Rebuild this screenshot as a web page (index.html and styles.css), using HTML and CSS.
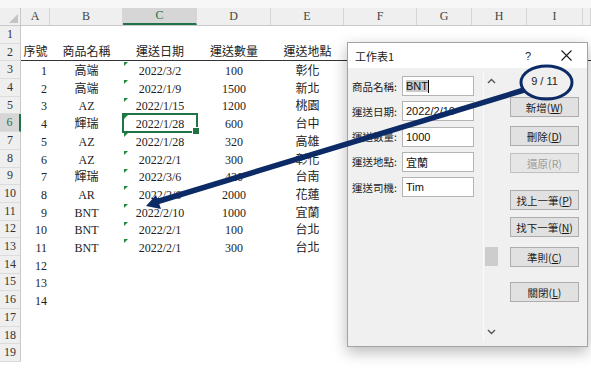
FILE: index.html
```html
<!DOCTYPE html>
<html lang="zh-Hant">
<head>
  <meta charset="UTF-8">
  <meta name="viewport" content="width=device-width, initial-scale=1.0">
  <title>工作表1 - 資料表單</title>
  <link rel="stylesheet" href="styles.css">
</head>
<body>

  <!-- Worksheet -->
  <div class="topbar"></div>
  <div class="sheet">
    <div class="row colhead">
      <div class="corner"><span class="corner-tri"></span></div>
      <div>A</div><div>B</div><div class="active">C</div><div>D</div><div>E</div>
      <div>F</div><div>G</div><div>H</div><div>I</div><div></div>
    </div>

    <div class="row"><div class="rh">1</div></div>
    <div class="row titles">
      <div class="rh">2</div>
      <div class="cell">序號</div><div class="cell">商品名稱</div><div class="cell">運送日期</div>
      <div class="cell">運送數量</div><div class="cell">運送地點</div>
      <div class="cell"></div><div class="cell"></div><div class="cell"></div><div class="cell"></div><div class="cell"></div>
    </div>
    <div class="row"><div class="rh">3</div><div class="cell num">1</div><div class="cell">高端</div><div class="cell tri">2022/3/2</div><div class="cell">100</div><div class="cell">彰化</div></div>
    <div class="row"><div class="rh">4</div><div class="cell num">2</div><div class="cell">高端</div><div class="cell tri">2022/1/9</div><div class="cell">1500</div><div class="cell">新北</div></div>
    <div class="row"><div class="rh">5</div><div class="cell num">3</div><div class="cell">AZ</div><div class="cell tri">2022/1/15</div><div class="cell">1200</div><div class="cell">桃園</div></div>
    <div class="row"><div class="rh active">6</div><div class="cell num">4</div><div class="cell">輝瑞</div><div class="cell tri sel">2022/1/28</div><div class="cell">600</div><div class="cell">台中</div></div>
    <div class="row"><div class="rh">7</div><div class="cell num">5</div><div class="cell">AZ</div><div class="cell tri">2022/1/28</div><div class="cell">320</div><div class="cell">高雄</div></div>
    <div class="row"><div class="rh">8</div><div class="cell num">6</div><div class="cell">AZ</div><div class="cell tri">2022/2/1</div><div class="cell">300</div><div class="cell">彰化</div></div>
    <div class="row"><div class="rh">9</div><div class="cell num">7</div><div class="cell">輝瑞</div><div class="cell tri">2022/3/6</div><div class="cell">420</div><div class="cell">台南</div></div>
    <div class="row"><div class="rh">10</div><div class="cell num">8</div><div class="cell">AR</div><div class="cell tri">2022/2/6</div><div class="cell">2000</div><div class="cell">花蓮</div></div>
    <div class="row"><div class="rh">11</div><div class="cell num">9</div><div class="cell">BNT</div><div class="cell tri">2022/2/10</div><div class="cell">1000</div><div class="cell">宜蘭</div></div>
    <div class="row"><div class="rh">12</div><div class="cell num">10</div><div class="cell">BNT</div><div class="cell tri">2022/2/1</div><div class="cell">100</div><div class="cell">台北</div></div>
    <div class="row"><div class="rh">13</div><div class="cell num">11</div><div class="cell">BNT</div><div class="cell tri">2022/2/1</div><div class="cell">300</div><div class="cell">台北</div></div>
    <div class="row"><div class="rh">14</div><div class="cell num">12</div></div>
    <div class="row"><div class="rh">15</div><div class="cell num">13</div></div>
    <div class="row"><div class="rh">16</div><div class="cell num">14</div></div>
    <div class="row"><div class="rh">17</div></div>
    <div class="row"><div class="rh">18</div></div>
    <div class="row"><div class="rh">19</div></div>
  </div>

  <!-- Data form dialog -->
  <div class="dialog">
    <div class="dlg-title">
      <span class="dlg-name">工作表1</span>
      <span class="dlg-help">?</span>
      <svg class="dlg-close" width="11" height="11" viewBox="0 0 11 11">
        <path d="M0.5 0.5L10.5 10.5M10.5 0.5L0.5 10.5" stroke="#1a1a1a" stroke-width="1.1" fill="none"/>
      </svg>
    </div>
    <div class="dlg-body">
      <div class="fields">
        <div class="field"><span class="label">商品名稱:</span><div class="input"><span class="hl">BNT</span><span class="caret"></span></div></div>
        <div class="field"><span class="label">運送日期:</span><div class="input">2022/2/10</div></div>
        <div class="field"><span class="label">運送數量:</span><div class="input">1000</div></div>
        <div class="field"><span class="label">運送地點:</span><div class="input">宜蘭</div></div>
        <div class="field"><span class="label">運送司機:</span><div class="input">Tim</div></div>
      </div>
      <div class="vscroll">
        <div class="arrow">
          <svg width="9" height="6" viewBox="0 0 9 6"><path d="M1 5L4.5 1.5L8 5" stroke="#555" stroke-width="1.4" fill="none"/></svg>
        </div>
        <div class="track"><div class="thumb"></div></div>
        <div class="arrow">
          <svg width="9" height="6" viewBox="0 0 9 6"><path d="M1 1L4.5 4.5L8 1" stroke="#555" stroke-width="1.4" fill="none"/></svg>
        </div>
      </div>
      <div class="actions">
        <div class="counter">9 / 11</div>
        <button class="btn">新增(<u>W</u>)</button>
        <button class="btn btn-del">刪除(<u>D</u>)</button>
        <button class="btn btn-undo" disabled>還原(R)</button>
        <button class="btn btn-prev">找上一筆(<u>P</u>)</button>
        <button class="btn btn-next">找下一筆(<u>N</u>)</button>
        <button class="btn btn-crit">準則(<u>C</u>)</button>
        <button class="btn btn-close">關閉(<u>L</u>)</button>
      </div>
    </div>
  </div>

  <!-- Callout: circle on record counter, arrow to the row -->
  <svg class="callout" width="591" height="371" viewBox="0 0 591 371">
    <ellipse cx="546.5" cy="82.5" rx="25.5" ry="16.5" fill="none" stroke="#0c2b66" stroke-width="3"/>
    <line x1="156" y1="202" x2="524" y2="90" stroke="#0c2b66" stroke-width="5.5"/>
    <polygon points="146,206 161,209 156,195" fill="#0c2b66"/>
  </svg>

</body>
</html>
```

FILE: styles.css
```css
/* Reset & base */
* { margin: 0; padding: 0; box-sizing: border-box; }
body {
  position: relative;
  width: 591px;
  height: 371px;
  overflow: hidden;
  background: #fff;
  font-family: "Liberation Serif", "Noto Sans CJK TC", serif;
  color: #222;
}

/* Worksheet */
.topbar { height: 8px; background: #f7f7f7; }
.sheet { --cols: 21px 29px 73px 74px 74px 73px 73px 55px 55px 56px 8px; }
.row {
  display: grid;
  grid-template-columns: var(--cols);
  height: 17.7px;
}

/* Column header */
.colhead {
  height: 18px;
  background: #efefef;
  border-bottom: 1px solid #c8c8c8;
}
.colhead > div {
  display: flex;
  align-items: center;
  justify-content: center;
  font-size: 12px;
  color: #444;
  border-right: 1px solid #d6d6d6;
}
.colhead > .active {
  background: #d6d6d6;
  color: #217346;
  border-bottom: 2px solid #217346;
}
.colhead > .corner {
  align-items: flex-end;
  justify-content: flex-end;
  padding: 0 2px 2px 0;
  border-right: 1px solid #c8c8c8;
}
.corner-tri {
  width: 0; height: 0;
  border-left: 9px solid transparent;
  border-bottom: 9px solid #c4c4c4;
}

/* Row header */
.rh {
  display: flex;
  align-items: center;
  justify-content: center;
  background: #efefef;
  border-right: 1px solid #c8c8c8;
  border-bottom: 1px solid #dcdcdc;
  font-size: 12px;
  color: #333;
}
.rh.active {
  background: #d6d6d6;
  color: #217346;
  border-right: 2px solid #217346;
}

/* Cells */
.cell {
  position: relative;
  display: flex;
  align-items: flex-end;
  justify-content: center;
  font-size: 12px;
  line-height: 14px;
  padding-bottom: 1px;
  white-space: nowrap;
  color: #222;
}
.cell.num { justify-content: flex-end; padding-right: 3px; }
.titles .cell { border-bottom: 1px solid #333; }
.tri::before {
  content: "";
  position: absolute;
  left: 1px; top: 1px;
  border-top: 4px solid #1f8a3c;
  border-right: 4px solid transparent;
}
.sel {
  z-index: 1;
  outline: 2px solid #217346;
  outline-offset: -1px;
}
.sel::after {
  content: "";
  position: absolute;
  right: -3px; bottom: -3px;
  width: 6px; height: 6px;
  background: #217346;
  border: 1px solid #fff;
}

/* Dialog */
.dialog {
  position: absolute;
  left: 347px; top: 42px;
  width: 241px; height: 305px;
  display: flex;
  flex-direction: column;
  background: #f0f0f0;
  border: 1px solid #a3a3a3;
  box-shadow: 0 5px 14px rgba(0, 0, 0, 0.28);
  z-index: 5;
  font-family: "Noto Sans CJK TC", sans-serif;
  color: #1a1a1a;
}
.dlg-title {
  height: 25px;
  display: flex;
  align-items: center;
  padding-left: 7px;
  background: #fff;
}
.dlg-name { flex: 1; font-size: 11px; }
.dlg-help { font-family: "Liberation Sans", sans-serif; font-size: 11px; margin-right: 30px; }
.dlg-close { margin-right: 15px; }

.dlg-body { flex: 1; display: flex; padding: 0 7px 4px 4px; }

/* Fields */
.fields {
  width: 126px;
  padding-top: 8px;
  display: flex;
  flex-direction: column;
  gap: 5.3px;
}
.field { display: flex; align-items: center; height: 20px; }
.label { width: 50px; font-size: 10.5px; color: #222; }
.input {
  width: 72px; height: 20px;
  display: flex;
  align-items: center;
  padding-left: 3px;
  background: #fff;
  border: 1px solid #b4b4b4;
  font-family: "Liberation Sans", "Noto Sans CJK TC", sans-serif;
  font-size: 11px;
  color: #111;
}
.hl { background: #c9c9c9; }
.caret { width: 1px; height: 13px; background: #000; }

/* Scrollbar */
.vscroll {
  width: 15px;
  margin: 3px 0 0 5px;
  display: flex;
  flex-direction: column;
  border-left: 1px solid #fafafa;
}
.vscroll .arrow { height: 20px; display: flex; align-items: center; justify-content: center; }
.track { flex: 1; }
.thumb { width: 13px; height: 19px; margin: 156px 0 0 1px; background: #cdcdcd; }

/* Buttons */
.actions {
  width: 69px;
  margin-left: 12px;
  padding-top: 5px;
  display: flex;
  flex-direction: column;
}
.counter {
  height: 16px;
  line-height: 16px;
  margin-bottom: 8px;
  text-align: center;
  font-family: "Liberation Sans", sans-serif;
  font-size: 11px;
  color: #222;
}
.btn {
  height: 20px;
  background: #e1e1e1;
  border: 1px solid #adadad;
  font-family: "Noto Sans CJK TC", sans-serif;
  font-size: 10.5px;
  color: #1a1a1a;
}
.btn u { text-underline-offset: 1px; }
.btn[disabled] { color: #9a9a9a; background: #e6e6e6; border-color: #bfbfbf; }
.btn-del { margin-top: 9px; }
.btn-undo { margin-top: 7px; }
.btn-prev { margin-top: 17px; }
.btn-next { margin-top: 7px; }
.btn-crit { margin-top: 10px; }
.btn-close { margin-top: 15px; }

/* Callout overlay */
.callout {
  position: absolute;
  left: 0; top: 0;
  z-index: 10;
  pointer-events: none;
}
```
